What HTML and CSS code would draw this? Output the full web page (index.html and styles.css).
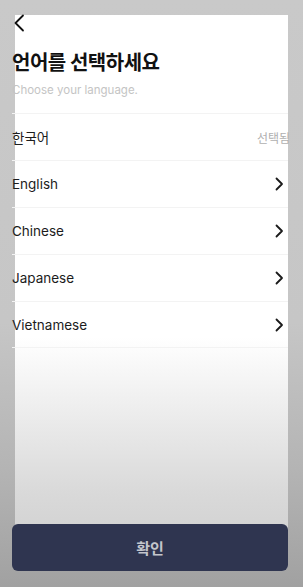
FILE: index.html
```html
<!DOCTYPE html>
<html lang="ko">
<head>
    <meta charset="UTF-8">
    <meta name="viewport" content="width=device-width, initial-scale=1.0">
    <title>언어 선택</title>
    <link rel="stylesheet" href="styles.css">
</head>
<body>
    <div class="sheet"></div>

    <div class="page">
        <button class="back-btn" aria-label="뒤로">
            <svg width="12" height="18" viewBox="0 0 12 18">
                <path d="M10 1.5 L2.5 9 L10 16.5" fill="none" stroke="#111" stroke-width="1.8" stroke-linecap="round" stroke-linejoin="round"/>
            </svg>
        </button>

        <h1 class="title">언어를 선택하세요</h1>
        <p class="subtitle">Choose your language.</p>

        <ul class="lang-list">
            <li class="lang-item">
                <span class="lang-name">한국어</span>
                <span class="lang-selected">선택됨</span>
            </li>
            <li class="lang-item">
                <span class="lang-name">English</span>
                <svg class="chevron" width="9" height="14" viewBox="0 0 9 14"><path d="M1.5 1.5 L7 7 L1.5 12.5" /></svg>
            </li>
            <li class="lang-item">
                <span class="lang-name">Chinese</span>
                <svg class="chevron" width="9" height="14" viewBox="0 0 9 14"><path d="M1.5 1.5 L7 7 L1.5 12.5" /></svg>
            </li>
            <li class="lang-item">
                <span class="lang-name">Japanese</span>
                <svg class="chevron" width="9" height="14" viewBox="0 0 9 14"><path d="M1.5 1.5 L7 7 L1.5 12.5" /></svg>
            </li>
            <li class="lang-item">
                <span class="lang-name">Vietnamese</span>
                <svg class="chevron" width="9" height="14" viewBox="0 0 9 14"><path d="M1.5 1.5 L7 7 L1.5 12.5" /></svg>
            </li>
        </ul>

        <button class="confirm-btn">확인</button>
    </div>
</body>
</html>
```

FILE: styles.css
```css
* {
    margin: 0;
    padding: 0;
    box-sizing: border-box;
}

html, body {
    height: 100%;
}

body {
    position: relative;
    background: linear-gradient(to bottom, #c9c9c9 0%, #c6c6c6 55%, #b4b4b4 80%, #a1a1a1 100%);
    font-family: Inter, "Noto Sans CJK KR", sans-serif;
    color: #1a1a1a;
    overflow: hidden;
}

/* 흰 시트 (배경 레이어) */
.sheet {
    position: absolute;
    top: 15px;
    left: 15px;
    right: 15px;
    bottom: 16px;
    background: linear-gradient(to bottom, #ffffff 0%, #ffffff 58%, #ececec 72%, #d9d9d9 86%, #cdcdcd 100%);
    border-radius: 0 0 6px 6px;
}

.page {
    position: relative;
    height: 100%;
    display: flex;
    flex-direction: column;
    padding: 0 15px 16px 12px;
}

.back-btn {
    background: none;
    border: none;
    width: 12px;
    height: 18px;
    margin-top: 14px;
    margin-left: 1px;
    display: flex;
    cursor: pointer;
}

.title {
    margin-top: 16px;
    font-size: 20px;
    line-height: 30px;
    font-weight: 700;
    letter-spacing: -0.5px;
    color: #111111;
}

.subtitle {
    margin-top: 4px;
    font-size: 11.5px;
    line-height: 16px;
    color: #c4c4c4;
}

.lang-list {
    list-style: none;
    margin-top: 15px;
}

.lang-item {
    height: 47px;
    display: flex;
    align-items: center;
    justify-content: space-between;
    border-top: 1px solid #f3f3f3;
}

.lang-item:last-child {
    border-bottom: 1px solid #f3f3f3;
}

.lang-name {
    font-size: 13.5px;
    color: #1c1c1c;
}

.lang-selected {
    font-size: 12px;
    color: #b0b0b0;
    margin-right: -2px;
}

.chevron {
    margin-right: 4px;
}

.chevron path {
    fill: none;
    stroke: #1a1a1a;
    stroke-width: 1.8;
    stroke-linecap: round;
    stroke-linejoin: round;
}

.confirm-btn {
    margin-top: auto;
    height: 47px;
    width: 276px;
    border: none;
    border-radius: 6px;
    background: #2f3550;
    color: #c3c5cc;
    font-family: "Noto Sans CJK KR", sans-serif;
    font-size: 15px;
    font-weight: 700;
    cursor: pointer;
}
```
